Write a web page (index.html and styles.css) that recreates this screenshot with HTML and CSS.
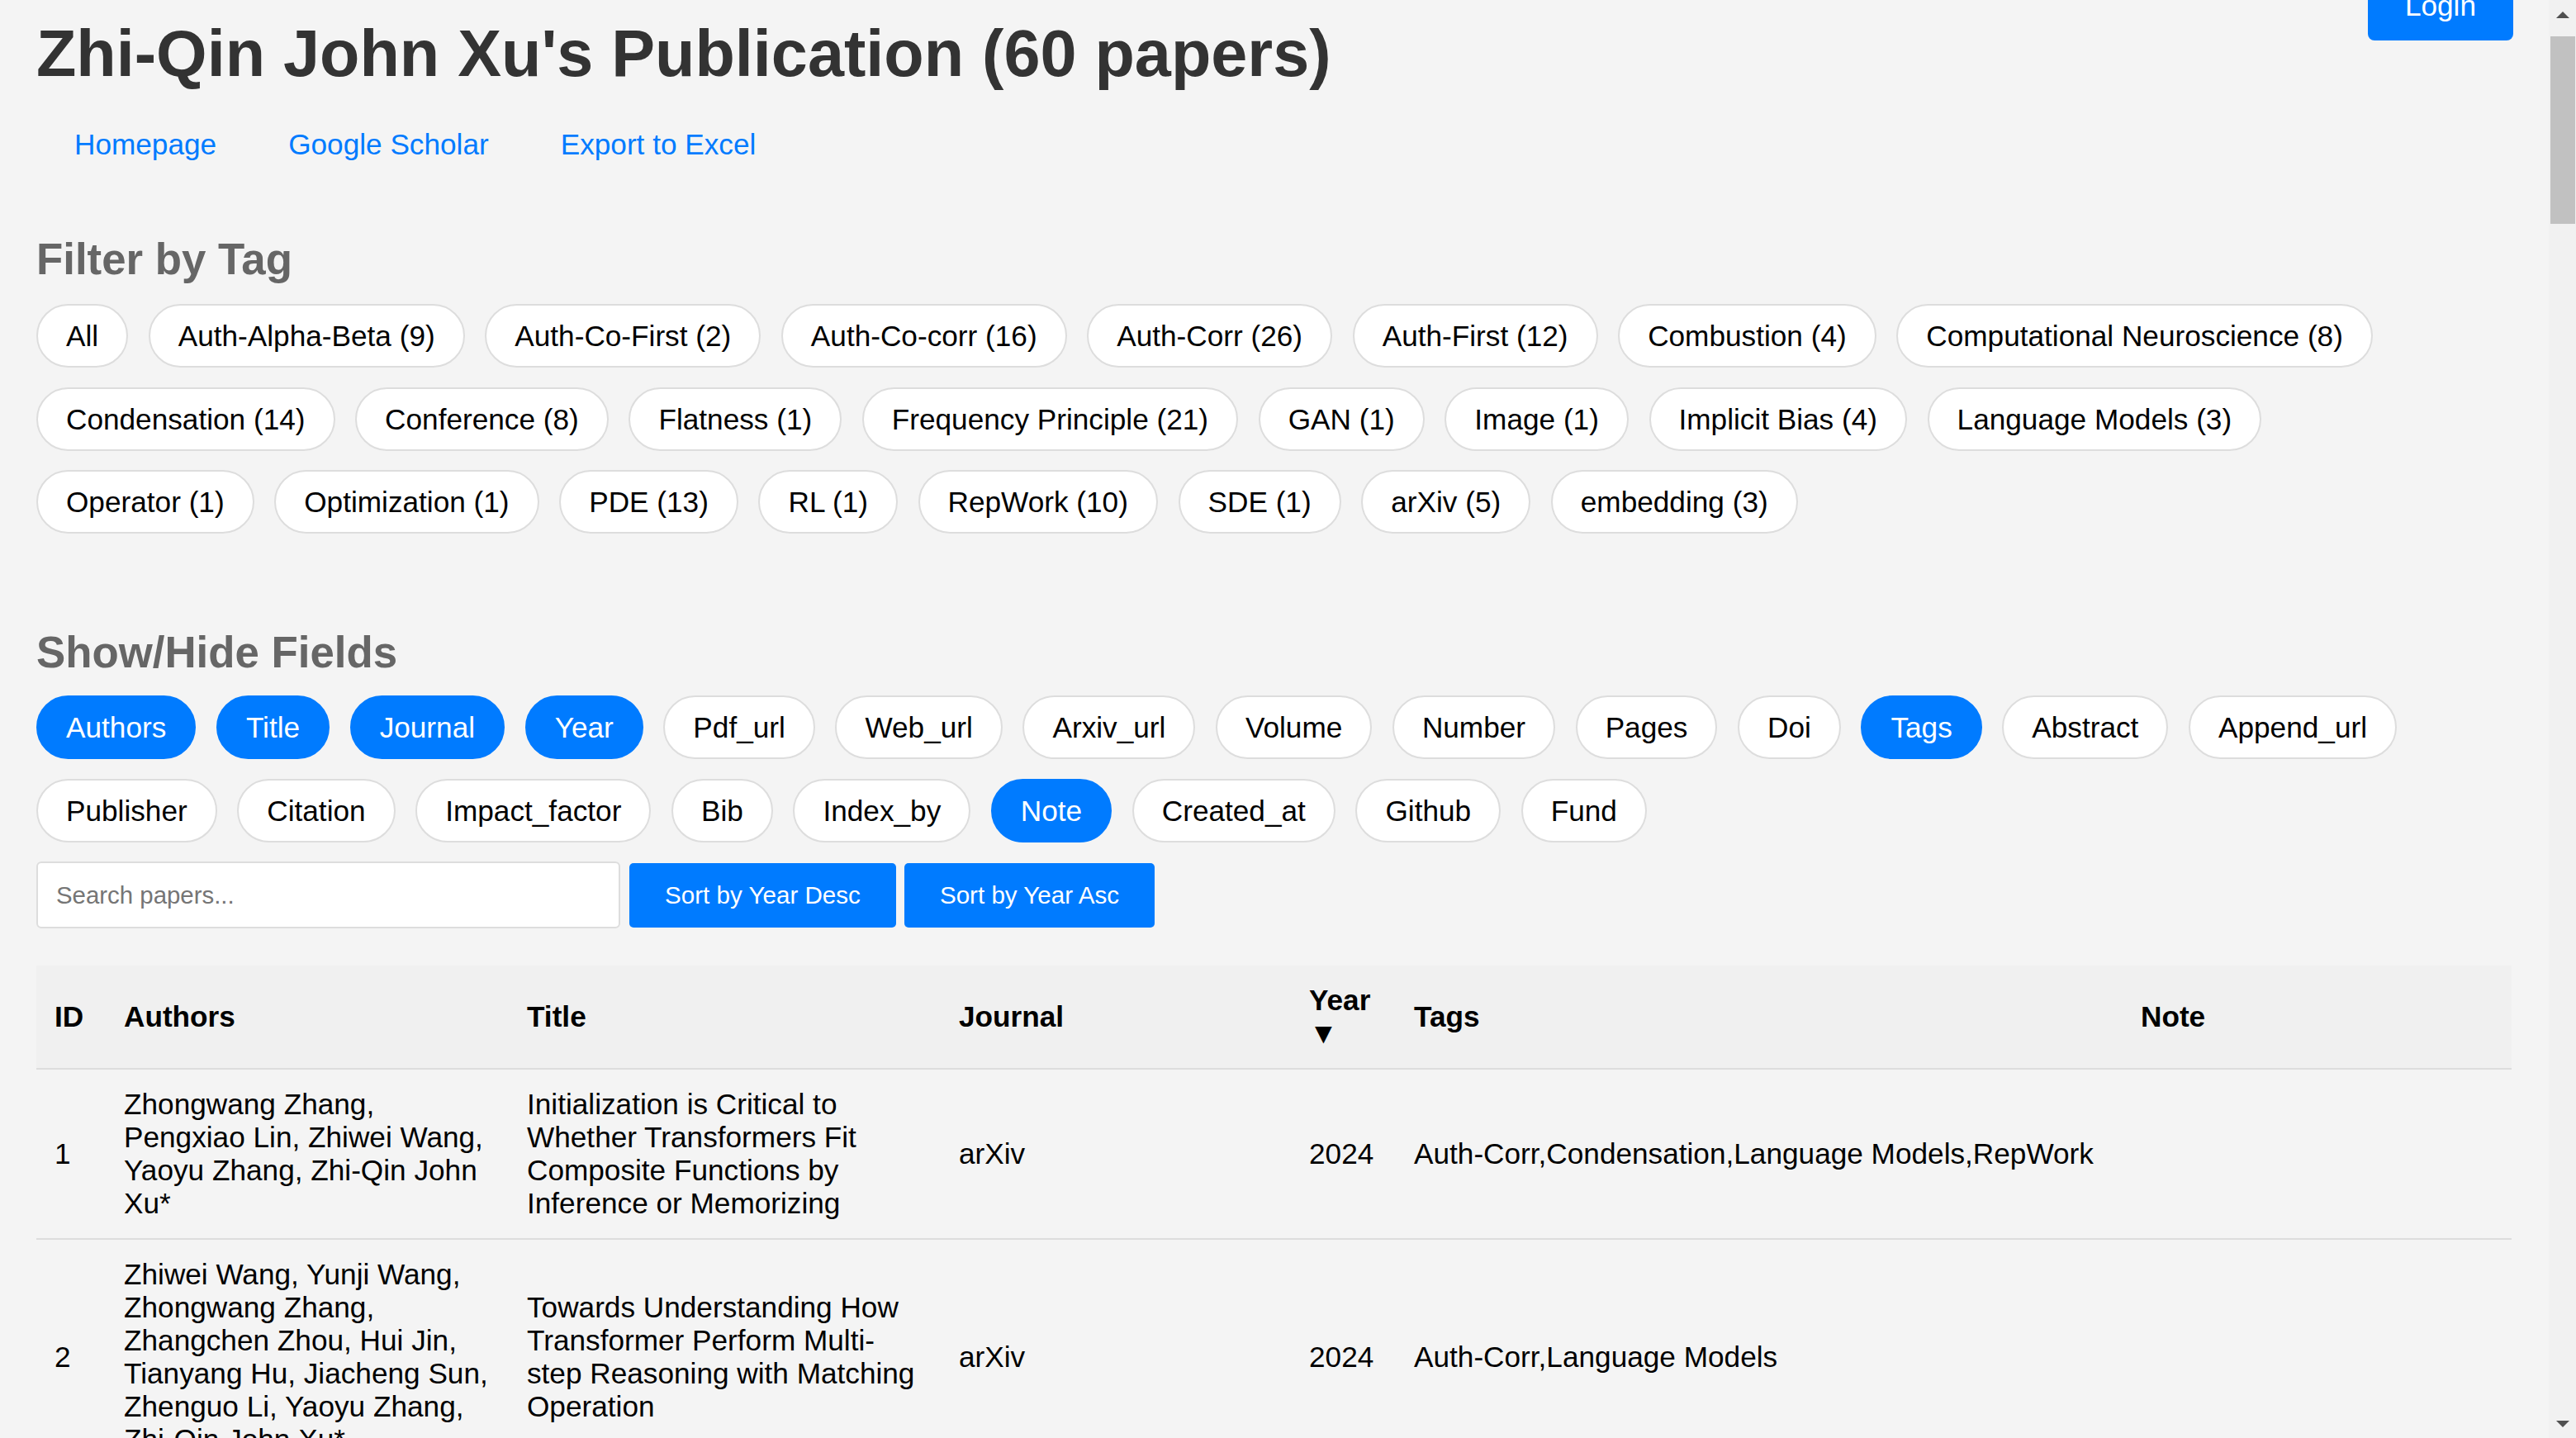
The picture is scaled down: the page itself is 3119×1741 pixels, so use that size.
FILE: index.html
```html
<!DOCTYPE html>
<html lang="en">
<head>
<meta charset="utf-8">
<title>Zhi-Qin John Xu's Publication</title>
<link rel="stylesheet" href="styles.css">
</head>
<body>
<div class="page">
  <button class="login">Login</button>
  <h1 class="title">Zhi-Qin John Xu's Publication (60 papers)</h1>
  <nav class="links">
    <a href="#">Homepage</a>
    <a href="#">Google Scholar</a>
    <a href="#">Export to Excel</a>
  </nav>

  <h2 class="section-title filter-title">Filter by Tag</h2>
  <div class="chips tags">
    <button class="chip">All</button>
    <button class="chip">Auth-Alpha-Beta (9)</button>
    <button class="chip">Auth-Co-First (2)</button>
    <button class="chip">Auth-Co-corr (16)</button>
    <button class="chip">Auth-Corr (26)</button>
    <button class="chip">Auth-First (12)</button>
    <button class="chip">Combustion (4)</button>
    <button class="chip">Computational Neuroscience (8)</button>
    <button class="chip">Condensation (14)</button>
    <button class="chip">Conference (8)</button>
    <button class="chip">Flatness (1)</button>
    <button class="chip">Frequency Principle (21)</button>
    <button class="chip">GAN (1)</button>
    <button class="chip">Image (1)</button>
    <button class="chip">Implicit Bias (4)</button>
    <button class="chip">Language Models (3)</button>
    <button class="chip">Operator (1)</button>
    <button class="chip">Optimization (1)</button>
    <button class="chip">PDE (13)</button>
    <button class="chip">RL (1)</button>
    <button class="chip">RepWork (10)</button>
    <button class="chip">SDE (1)</button>
    <button class="chip">arXiv (5)</button>
    <button class="chip">embedding (3)</button>
  </div>

  <h2 class="section-title fields-title">Show/Hide Fields</h2>
  <div class="chips fields">
    <button class="chip active">Authors</button>
    <button class="chip active">Title</button>
    <button class="chip active">Journal</button>
    <button class="chip active">Year</button>
    <button class="chip">Pdf_url</button>
    <button class="chip">Web_url</button>
    <button class="chip">Arxiv_url</button>
    <button class="chip">Volume</button>
    <button class="chip">Number</button>
    <button class="chip">Pages</button>
    <button class="chip">Doi</button>
    <button class="chip active">Tags</button>
    <button class="chip">Abstract</button>
    <button class="chip">Append_url</button>
    <button class="chip">Publisher</button>
    <button class="chip">Citation</button>
    <button class="chip">Impact_factor</button>
    <button class="chip">Bib</button>
    <button class="chip">Index_by</button>
    <button class="chip active">Note</button>
    <button class="chip">Created_at</button>
    <button class="chip">Github</button>
    <button class="chip">Fund</button>
  </div>

  <div class="controls">
    <input class="search" type="text" placeholder="Search papers...">
    <button class="sort">Sort by Year Desc</button>
    <button class="sort">Sort by Year Asc</button>
  </div>

  <table class="papers">
    <colgroup>
      <col class="c-id"><col class="c-authors"><col class="c-title"><col class="c-journal"><col class="c-year"><col class="c-tags"><col class="c-note">
    </colgroup>
    <thead>
      <tr>
        <th>ID</th>
        <th>Authors</th>
        <th>Title</th>
        <th>Journal</th>
        <th>Year ▼</th>
        <th>Tags</th>
        <th>Note</th>
      </tr>
    </thead>
    <tbody>
      <tr>
        <td>1</td>
        <td>Zhongwang Zhang, Pengxiao Lin, Zhiwei Wang, Yaoyu Zhang, Zhi-Qin John Xu*</td>
        <td>Initialization is Critical to Whether Transformers Fit Composite Functions by Inference or Memorizing</td>
        <td>arXiv</td>
        <td>2024</td>
        <td>Auth-Corr,Condensation,Language Models,RepWork</td>
        <td></td>
      </tr>
      <tr>
        <td>2</td>
        <td>Zhiwei Wang, Yunji Wang, Zhongwang Zhang, Zhangchen Zhou, Hui Jin, Tianyang Hu, Jiacheng Sun, Zhenguo Li, Yaoyu Zhang, Zhi-Qin John Xu*</td>
        <td>Towards Understanding How Transformer Perform Multi-step Reasoning with Matching Operation</td>
        <td>arXiv</td>
        <td>2024</td>
        <td>Auth-Corr,Language Models</td>
        <td></td>
      </tr>
    </tbody>
  </table>
</div>

<div class="scrollbar" aria-hidden="true">
  <div class="sb-button sb-up">
    <svg width="16" height="8" viewBox="0 0 16 8"><polygon points="0,8 8,0 16,8" fill="#505050"/></svg>
  </div>
  <div class="sb-thumb"></div>
  <div class="sb-space"></div>
  <div class="sb-button sb-down">
    <svg width="16" height="8" viewBox="0 0 16 8"><polygon points="0,0 16,0 8,8" fill="#505050"/></svg>
  </div>
</div>
</body>
</html>
```

FILE: styles.css
```css
html, body {
  height: 100%;
  overflow: hidden;
}

body {
  margin: 0;
  display: flex;
  background: #f4f4f4;
  font-family: "Liberation Sans", Arial, sans-serif;
  font-size: 35.2px;
  color: #000;
}

.page {
  flex: 1;
  min-width: 0;
  position: relative;
  padding: 0 45px 0 44px;
  overflow: hidden;
}

.login {
  position: absolute;
  top: -35px;
  right: 43px;
  height: 84px;
  padding: 0 45px;
  border: none;
  border-radius: 8px;
  background: #007bff;
  color: #fff;
  font: 35.2px/40px "Liberation Sans", Arial, sans-serif;
}

.title {
  margin: 19px 0 0;
  font-size: 79.2px;
  line-height: 91px;
  font-weight: bold;
  color: #333;
}

.links {
  display: flex;
  gap: 87px;
  margin-top: 45px;
  padding-left: 46px;
  line-height: 40px;
}

.links a {
  color: #007bff;
  text-decoration: none;
}

.section-title {
  margin: 0;
  font-size: 52.8px;
  line-height: 61px;
  font-weight: bold;
  color: #666;
}

.filter-title {
  margin-top: 88px;
}

.fields-title {
  margin-top: 113px;
}

.chips {
  display: flex;
  flex-wrap: wrap;
  gap: 23.5px 24.6px;
  padding-right: 80px;
}

.tags {
  margin-top: 24px;
}

.fields {
  margin-top: 22px;
  row-gap: 24px;
}

.chip {
  font: 35.2px/41px "Liberation Sans", Arial, sans-serif;
  padding: 16px 34px;
  border: 2px solid #ddd;
  border-radius: 40px;
  background: #fff;
  color: #000;
}

.chip.active {
  background: #007bff;
  border-color: #007bff;
  color: #fff;
}

.controls {
  display: flex;
  align-items: center;
  gap: 10px;
  margin-top: 23px;
}

.search {
  box-sizing: border-box;
  width: 707px;
  height: 81px;
  margin: 0 1px 0 0;
  padding: 0 22px;
  border: 2px solid #ddd;
  border-radius: 6px;
  background: #fff;
  font: 29.4px "Liberation Sans", Arial, sans-serif;
  color: #000;
}

.search::placeholder {
  color: #757575;
}

.sort {
  height: 78px;
  padding: 0 43px;
  border: none;
  border-radius: 5px;
  background: #007bff;
  color: #fff;
  font: 29.6px "Liberation Sans", Arial, sans-serif;
}

.papers {
  width: 100%;
  margin-top: 45px;
  border-collapse: collapse;
  table-layout: fixed;
  line-height: 40px;
}

.c-id { width: 84px; }
.c-authors { width: 488px; }
.c-title { width: 523px; }
.c-journal { width: 424px; }
.c-year { width: 127px; }
.c-tags { width: 880px; }
.c-note { width: 471px; }

.papers th,
.papers td {
  padding: 22px;
  text-align: left;
  vertical-align: middle;
}

.papers th {
  background: #f0f0f0;
  font-weight: bold;
  border-bottom: 2px solid #ddd;
}

.papers td {
  border-bottom: 2px solid #ddd;
}

.scrollbar {
  flex: none;
  width: 33px;
  height: 100%;
  background: #f1f1f1;
  display: flex;
  flex-direction: column;
  align-items: center;
}

.sb-button {
  height: 34px;
  display: flex;
  justify-content: center;
}

.sb-up {
  align-items: flex-start;
  padding-top: 14px;
  box-sizing: border-box;
}

.sb-down {
  align-items: flex-start;
  padding-top: 13px;
  box-sizing: border-box;
}

.sb-button svg {
  display: block;
}

.sb-thumb {
  width: 30px;
  height: 227px;
  margin-top: 10px;
  background: #c1c1c1;
}

.sb-space {
  flex: 1;
}
```
